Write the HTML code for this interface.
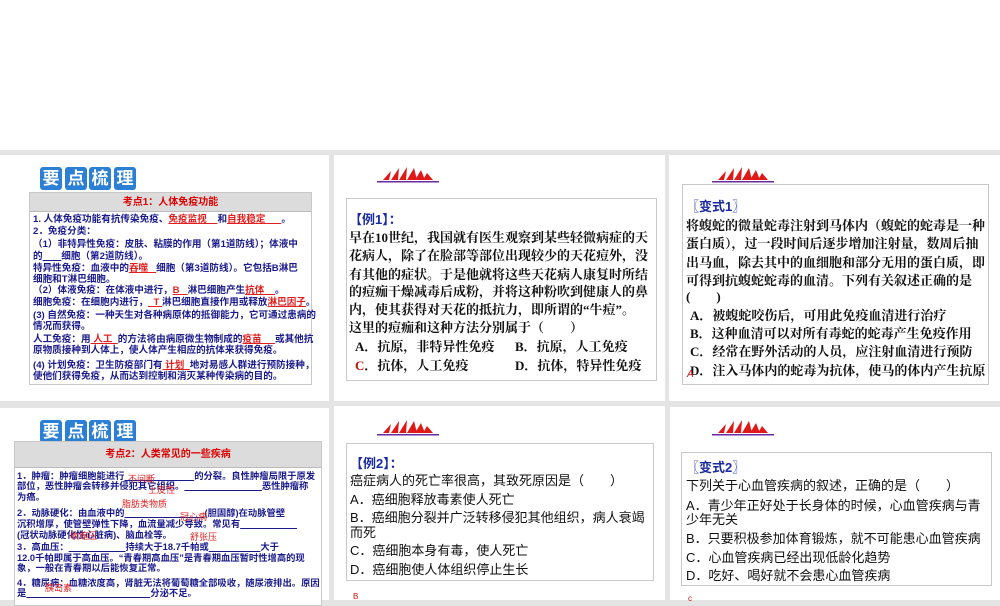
<!DOCTYPE html>
<html><head><meta charset="utf-8"><style>
*{margin:0;padding:0;box-sizing:border-box}
body{width:1000px;height:600px;overflow:hidden;background:#e4e4e4;position:relative;font-family:"Liberation Sans","Noto Sans CJK SC",sans-serif}
.a{position:absolute;white-space:nowrap}
.top{position:absolute;left:0;top:0;width:1000px;height:150px;background:#fff}
.p{position:absolute;background:#fff}
.box{position:absolute;border:1px solid #c8c8c8;background:#fff}
.bd{position:absolute;width:22px;height:23px;background:#2b7fd4;border-radius:3px;color:#fff;font-size:17px;font-weight:bold;text-align:center;line-height:23px}
.hd{position:absolute;background:#dcdcdc;border-bottom:1px solid #bbb;color:#d00;font-weight:bold;text-align:center}
.s{font-size:9.6px;font-weight:bold;color:#1a1a8c;line-height:11px}
.s2{font-size:9.3px;font-weight:bold;color:#1a1a8c;line-height:11px}
.r{color:#e02020;font-weight:normal}
.u{text-decoration:underline;color:#e02020}
.t{font-size:13px;color:#111;font-family:"Liberation Serif","Noto Serif CJK SC",serif;font-weight:bold}
.n{font-size:13px;color:#111}
.bl{color:#1a2aa0;font-weight:bold;font-family:"Liberation Sans","Noto Sans CJK SC",sans-serif}
</style></head><body>
<div class="top"></div>
<div class="p" style="left:0;top:155px;width:329px;height:246px"></div>
<div class="p" style="left:334px;top:155px;width:331px;height:246px"></div>
<div class="p" style="left:669px;top:155px;width:331px;height:246px"></div>
<div class="p" style="left:0;top:408px;width:329px;height:192px"></div>
<div class="p" style="left:334px;top:406px;width:331px;height:194px"></div>
<div class="p" style="left:670px;top:407px;width:330px;height:193px"></div>

<svg class="a" style="left:377px;top:165px" width="62" height="20" viewBox="0 0 62 20">
<path d="M6 15 L14 6 L12 15 Z M14 15 L22 3 L21 15 Z M22 15 L30 2 L29 15 Z M30 15 L37 3 L40 15 Z M38 15 L44 5 L48 15 Z M46 15 L50 8 L56 15 Z" fill="#e01818"/>
<rect x="0" y="16" width="62" height="1.5" fill="#6a2aa0"/></svg>
<svg class="a" style="left:712px;top:165px" width="62" height="20" viewBox="0 0 62 20">
<path d="M6 15 L14 6 L12 15 Z M14 15 L22 3 L21 15 Z M22 15 L30 2 L29 15 Z M30 15 L37 3 L40 15 Z M38 15 L44 5 L48 15 Z M46 15 L50 8 L56 15 Z" fill="#e01818"/>
<rect x="0" y="16" width="62" height="1.5" fill="#6a2aa0"/></svg>
<svg class="a" style="left:377px;top:418px" width="62" height="20" viewBox="0 0 62 20">
<path d="M6 15 L14 6 L12 15 Z M14 15 L22 3 L21 15 Z M22 15 L30 2 L29 15 Z M30 15 L37 3 L40 15 Z M38 15 L44 5 L48 15 Z M46 15 L50 8 L56 15 Z" fill="#e01818"/>
<rect x="0" y="16" width="62" height="1.5" fill="#6a2aa0"/></svg>
<svg class="a" style="left:712px;top:418px" width="62" height="20" viewBox="0 0 62 20">
<path d="M6 15 L14 6 L12 15 Z M14 15 L22 3 L21 15 Z M22 15 L30 2 L29 15 Z M30 15 L37 3 L40 15 Z M38 15 L44 5 L48 15 Z M46 15 L50 8 L56 15 Z" fill="#e01818"/>
<rect x="0" y="16" width="62" height="1.5" fill="#6a2aa0"/></svg>

<!-- Panel 1 -->
<div class="bd" style="left:40px;top:167px">要</div><div class="bd" style="left:65px;top:167px">点</div><div class="bd" style="left:89px;top:167px">梳</div><div class="bd" style="left:114px;top:167px">理</div>
<div class="box" style="left:29px;top:192px;width:283px;height:193px"></div>
<div class="hd" style="left:30px;top:193px;width:281px;height:19px;font-size:10px;line-height:19px">考点1：人体免疫功能</div>
<div class="a s" style="left:33px;top:214px">1. 人体免疫功能有抗传染免疫、<span class="u">免疫监视&nbsp;&nbsp;&nbsp;&nbsp;</span>和<span class="u">自我稳定&nbsp;&nbsp;&nbsp;&nbsp;&nbsp;&nbsp;</span>。</div>
<div class="a s" style="left:33px;top:226px">2．免疫分类：</div>
<div class="a s" style="left:33px;top:239px">（1）非特异性免疫：皮肤、粘膜的作用（第1道防线）；体液中</div>
<div class="a s" style="left:33px;top:251px">的<span style="text-decoration:underline">&nbsp;&nbsp;&nbsp;&nbsp;&nbsp;&nbsp;&nbsp;</span>细胞（第2道防线）。</div>
<div class="a s" style="left:33px;top:263px">特异性免疫：血液中的<span class="u">吞噬&nbsp;&nbsp;&nbsp;</span>细胞（第3道防线）。它包括B淋巴</div>
<div class="a s" style="left:33px;top:274px">细胞和T淋巴细胞。</div>
<div class="a s" style="left:33px;top:285px">（2）体液免疫：在体液中进行，<span class="u">B&nbsp;&nbsp;&nbsp;</span>淋巴细胞产生<span class="u">抗体&nbsp;&nbsp;&nbsp;&nbsp;</span>。</div>
<div class="a s" style="left:33px;top:297px">细胞免疫：在细胞内进行，<span class="u">&nbsp;&nbsp;T&nbsp;</span>淋巴细胞直接作用或释放<span class="u">淋巴因子</span>。</div>
<div class="a s" style="left:33px;top:310px">(3) 自然免疫：一种天生对各种病原体的抵御能力，它可通过患病的</div>
<div class="a s" style="left:33px;top:321px">情况而获得。</div>
<div class="a s" style="left:33px;top:334px">人工免疫：用<span class="u">&nbsp;人工&nbsp;&nbsp;</span>的方法将由病原微生物制成的<span class="u">疫苗&nbsp;&nbsp;&nbsp;&nbsp;&nbsp;</span>或其他抗</div>
<div class="a s" style="left:33px;top:345px">原物质接种到人体上，使人体产生相应的抗体来获得免疫。</div>
<div class="a s" style="left:33px;top:360px">(4) 计划免疫：卫生防疫部门有<span class="u">&nbsp;计划&nbsp;&nbsp;</span>地对易感人群进行预防接种，</div>
<div class="a s" style="left:33px;top:371px">使他们获得免疫，从而达到控制和消灭某种传染病的目的。</div>

<!-- Panel 2 -->
<div class="box" style="left:346px;top:198px;width:311px;height:183px"></div>
<div class="a t" style="left:349px;top:209px"><span class="bl">【例1】：</span></div>
<div class="a t" style="left:349px;top:227px">早在10世纪，我国就有医生观察到某些轻微病症的天</div>
<div class="a t" style="left:349px;top:245px">花病人，除了在脸部等部位出现较少的天花痘外，没</div>
<div class="a t" style="left:349px;top:264px">有其他的症状。于是他就将这些天花病人康复时所结</div>
<div class="a t" style="left:349px;top:281px">的痘痂干燥减毒后成粉，并将这种粉吹到健康人的鼻</div>
<div class="a t" style="left:349px;top:299px">内，使其获得对天花的抵抗力，即所谓的“牛痘”。</div>
<div class="a t" style="left:349px;top:317px">这里的痘痂和这种方法分别属于（　　）</div>
<div class="a t" style="left:355px;top:336px">A．抗原，非特异性免疫</div>
<div class="a t" style="left:515px;top:336px">B．抗原，人工免疫</div>
<div class="a t" style="left:355px;top:355px"><span style="color:#c01010">C</span>．抗体，人工免疫</div>
<div class="a t" style="left:515px;top:355px">D．抗体，特异性免疫</div>

<!-- Panel 3 -->
<div class="box" style="left:682px;top:184px;width:307px;height:201px"></div>
<div class="a t" style="left:686px;top:196px"><span class="bl">〖变式1〗</span></div>
<div class="a t" style="left:686px;top:215px">将蝮蛇的微量蛇毒注射到马体内（蝮蛇的蛇毒是一种</div>
<div class="a t" style="left:686px;top:233px">蛋白质），过一段时间后逐步增加注射量，数周后抽</div>
<div class="a t" style="left:686px;top:252px">出马血，除去其中的血细胞和部分无用的蛋白质，即</div>
<div class="a t" style="left:686px;top:270px">可得到抗蝮蛇蛇毒的血清。下列有关叙述正确的是</div>
<div class="a t" style="left:686px;top:286px">(　　)</div>
<div class="a t" style="left:690px;top:305px">A．被蝮蛇咬伤后，可用此免疫血清进行治疗</div>
<div class="a t" style="left:690px;top:323px">B．这种血清可以对所有毒蛇的蛇毒产生免疫作用</div>
<div class="a t" style="left:690px;top:341px">C．经常在野外活动的人员，应注射血清进行预防</div>
<div class="a t" style="left:690px;top:360px">D．注入马体内的蛇毒为抗体，使马的体内产生抗原</div>
<div class="a" style="left:687px;top:369px;font-size:10px;color:#d01010;font-style:italic">A</div>

<!-- Panel 4 -->
<div class="bd" style="left:40px;top:420px">要</div><div class="bd" style="left:65px;top:420px">点</div><div class="bd" style="left:89px;top:420px">梳</div><div class="bd" style="left:114px;top:420px">理</div>
<div class="box" style="left:14px;top:441px;width:308px;height:165px"></div>
<div class="hd" style="left:15px;top:442px;width:306px;height:26px;font-size:10px;line-height:26px">考点2：人类常见的一些疾病</div>
<div class="a s2" style="left:17px;top:471px">1．肿瘤：肿瘤细胞能进行<span style="text-decoration:underline">&nbsp;&nbsp;&nbsp;&nbsp;&nbsp;&nbsp;&nbsp;&nbsp;&nbsp;&nbsp;&nbsp;&nbsp;&nbsp;&nbsp;&nbsp;&nbsp;&nbsp;&nbsp;&nbsp;&nbsp;&nbsp;&nbsp;&nbsp;&nbsp;&nbsp;&nbsp;&nbsp;</span>的分裂。良性肿瘤局限于原发</div>
<div class="a s2" style="left:17px;top:481px">部位，恶性肿瘤会转移并侵犯其它组织。<span style="text-decoration:underline">&nbsp;&nbsp;&nbsp;&nbsp;&nbsp;&nbsp;&nbsp;&nbsp;&nbsp;&nbsp;&nbsp;&nbsp;&nbsp;&nbsp;&nbsp;&nbsp;&nbsp;&nbsp;&nbsp;&nbsp;&nbsp;&nbsp;&nbsp;&nbsp;&nbsp;&nbsp;&nbsp;&nbsp;&nbsp;&nbsp;</span>恶性肿瘤称</div>
<div class="a s2" style="left:17px;top:492px">为癌。</div>
<div class="a s2" style="left:17px;top:508px">2．动脉硬化：由血液中的<span style="text-decoration:underline">&nbsp;&nbsp;&nbsp;&nbsp;&nbsp;&nbsp;&nbsp;&nbsp;&nbsp;&nbsp;&nbsp;&nbsp;&nbsp;&nbsp;&nbsp;&nbsp;&nbsp;&nbsp;&nbsp;&nbsp;&nbsp;&nbsp;&nbsp;&nbsp;&nbsp;&nbsp;&nbsp;&nbsp;&nbsp;&nbsp;&nbsp;</span>(胆固醇)在动脉管壁</div>
<div class="a s2" style="left:17px;top:519px">沉积增厚，使管壁弹性下降，血流量减少导致。常见有<span style="text-decoration:underline">&nbsp;&nbsp;&nbsp;&nbsp;&nbsp;&nbsp;&nbsp;&nbsp;&nbsp;&nbsp;&nbsp;&nbsp;&nbsp;&nbsp;&nbsp;&nbsp;&nbsp;&nbsp;&nbsp;&nbsp;&nbsp;&nbsp;</span></div>
<div class="a s2" style="left:17px;top:530px">(冠状动脉硬化性心脏病)、脑血栓等。</div>
<div class="a s2" style="left:17px;top:542px">3．高血压：<span style="text-decoration:underline">&nbsp;&nbsp;&nbsp;&nbsp;&nbsp;&nbsp;&nbsp;&nbsp;&nbsp;&nbsp;&nbsp;&nbsp;&nbsp;&nbsp;&nbsp;&nbsp;&nbsp;&nbsp;&nbsp;&nbsp;&nbsp;&nbsp;</span>持续大于18.7千帕或<span style="text-decoration:underline">&nbsp;&nbsp;&nbsp;&nbsp;&nbsp;&nbsp;&nbsp;&nbsp;&nbsp;&nbsp;&nbsp;&nbsp;&nbsp;&nbsp;&nbsp;&nbsp;&nbsp;&nbsp;&nbsp;&nbsp;</span>大于</div>
<div class="a s2" style="left:17px;top:553px">12.0千帕即属于高血压。“青春期高血压”是青春期血压暂时性增高的现</div>
<div class="a s2" style="left:17px;top:563px">象，一般在青春期以后能恢复正常。</div>
<div class="a s2" style="left:17px;top:578px">4．糖尿病：血糖浓度高，肾脏无法将葡萄糖全部吸收，随尿液排出。原因</div>
<div class="a s2" style="left:17px;top:588px">是<span style="text-decoration:underline">&nbsp;&nbsp;&nbsp;&nbsp;&nbsp;&nbsp;&nbsp;&nbsp;&nbsp;&nbsp;&nbsp;&nbsp;&nbsp;&nbsp;&nbsp;&nbsp;&nbsp;&nbsp;&nbsp;&nbsp;&nbsp;&nbsp;&nbsp;&nbsp;&nbsp;&nbsp;&nbsp;&nbsp;&nbsp;&nbsp;&nbsp;&nbsp;&nbsp;&nbsp;&nbsp;&nbsp;&nbsp;&nbsp;&nbsp;&nbsp;&nbsp;&nbsp;&nbsp;&nbsp;&nbsp;&nbsp;&nbsp;&nbsp;</span>分泌不足。</div>
<div class="a r" style="left:128px;top:472px;font-size:9px">不间断</div>
<div class="a r" style="left:148px;top:483px;font-size:9px">上皮性</div>
<div class="a r" style="left:122px;top:497px;font-size:9px">脂肪类物质</div>
<div class="a r" style="left:180px;top:510px;font-size:9px">冠心病</div>
<div class="a r" style="left:70px;top:529px;font-size:9px">收缩压</div>
<div class="a r" style="left:190px;top:530px;font-size:9px">舒张压</div>
<div class="a r" style="left:45px;top:581px;font-size:9px">胰岛素</div>

<!-- Panel 5 -->
<div class="box" style="left:346px;top:443px;width:308px;height:138px"></div>
<div class="a n" style="left:350px;top:453px"><span class="bl">【例2】：</span></div>
<div class="a n" style="left:350px;top:470px">癌症病人的死亡率很高，其致死原因是（　　）</div>
<div class="a n" style="left:350px;top:489px">A．癌细胞释放毒素使人死亡</div>
<div class="a n" style="left:350px;top:507px">B．癌细胞分裂并广泛转移侵犯其他组织，病人衰竭</div>
<div class="a n" style="left:350px;top:522px">而死</div>
<div class="a n" style="left:350px;top:540px">C．癌细胞本身有毒，使人死亡</div>
<div class="a n" style="left:350px;top:559px">D．癌细胞使人体组织停止生长</div>
<div class="a" style="left:353px;top:592px;font-size:8px;color:#d01010">B</div>

<!-- Panel 6 -->
<div class="box" style="left:681px;top:452px;width:311px;height:134px"></div>
<div class="a n" style="left:686px;top:457px"><span class="bl">〖变式2〗</span></div>
<div class="a n" style="left:686px;top:475px">下列关于心血管疾病的叙述，正确的是（　　）</div>
<div class="a n" style="left:686px;top:495px">A．青少年正好处于长身体的时候，心血管疾病与青</div>
<div class="a n" style="left:686px;top:509px">少年无关</div>
<div class="a n" style="left:686px;top:528px">B．只要积极参加体育锻炼，就不可能患心血管疾病</div>
<div class="a n" style="left:686px;top:547px">C．心血管疾病已经出现低龄化趋势</div>
<div class="a n" style="left:686px;top:565px">D．吃好、喝好就不会患心血管疾病</div>
<div class="a" style="left:688px;top:594px;font-size:8px;color:#d01010">c</div>
</body></html>
